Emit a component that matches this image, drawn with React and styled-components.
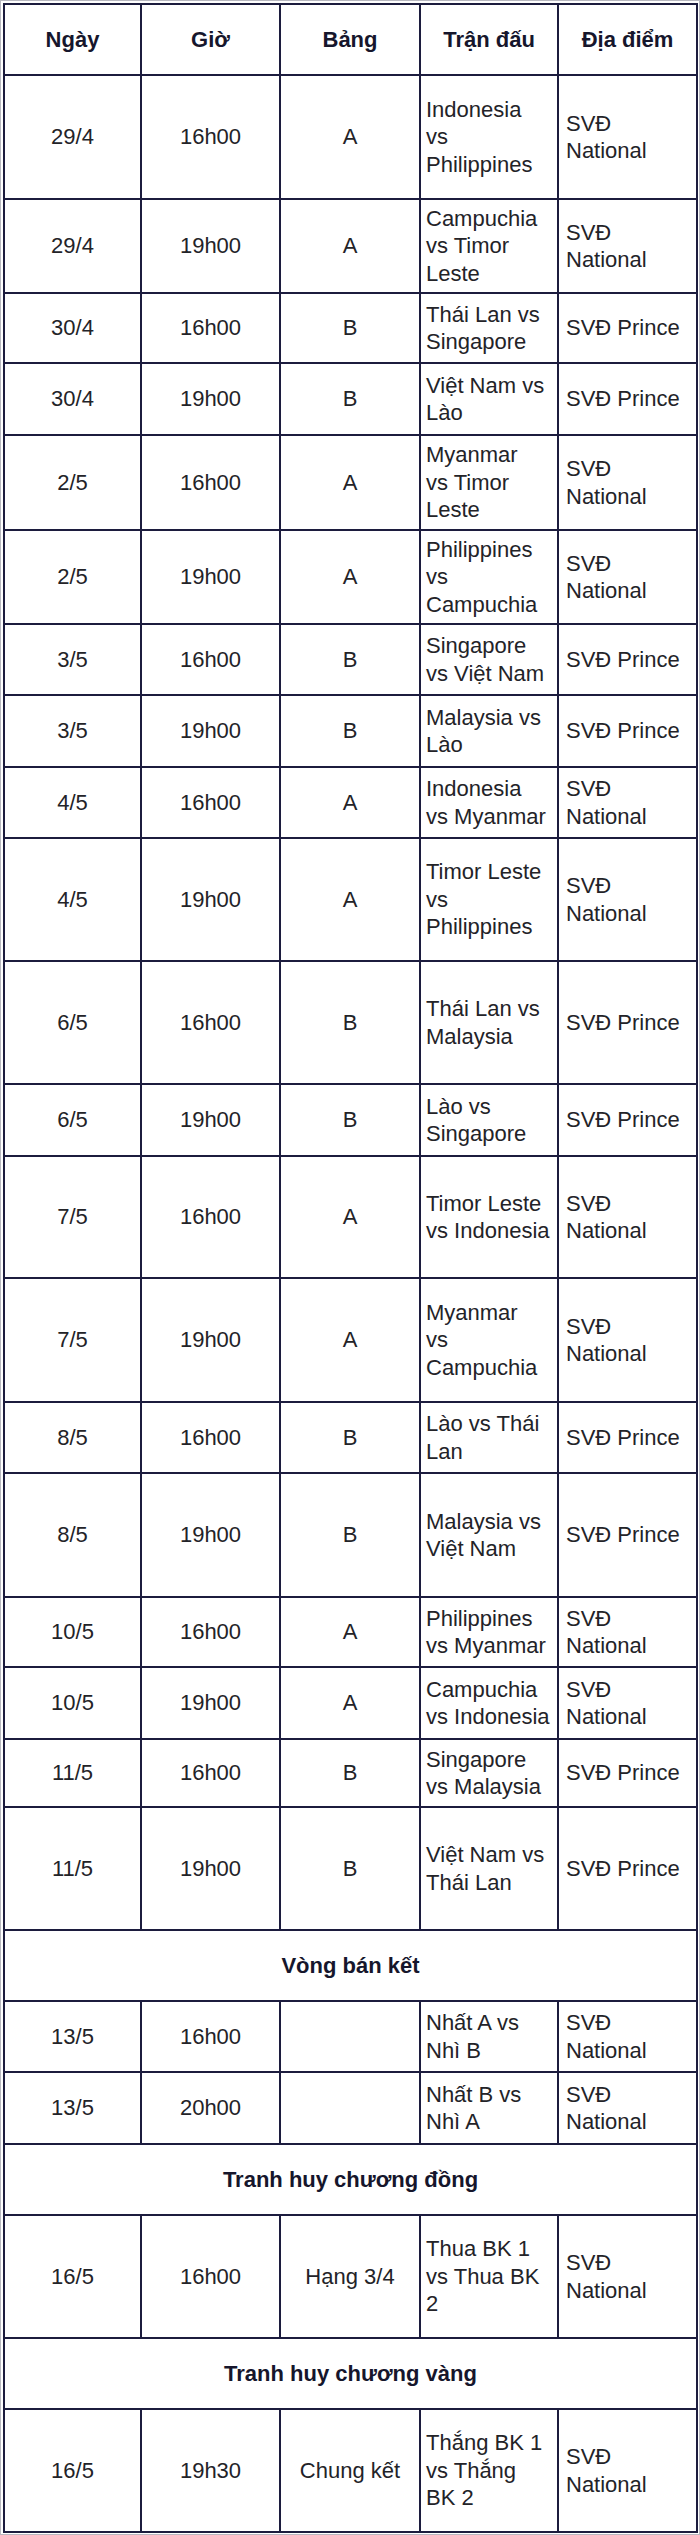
import React, { Fragment } from 'react'
import styled, { createGlobalStyle } from 'styled-components'

const GlobalStyle = createGlobalStyle`
  html, body {
    margin: 0;
    padding: 0;
    background: #ffffff;
  }
`

const matches = [
  { date: '29/4', time: '16h00', group: 'A', match: ['Indonesia', 'vs', 'Philippines'], venue: ['SVĐ', 'National'], h: 124 },
  { date: '29/4', time: '19h00', group: 'A', match: ['Campuchia', 'vs Timor', 'Leste'], venue: ['SVĐ', 'National'], h: 94 },
  { date: '30/4', time: '16h00', group: 'B', match: ['Thái Lan vs', 'Singapore'], venue: ['SVĐ Prince'], h: 70 },
  { date: '30/4', time: '19h00', group: 'B', match: ['Việt Nam vs', 'Lào'], venue: ['SVĐ Prince'], h: 72 },
  { date: '2/5', time: '16h00', group: 'A', match: ['Myanmar', 'vs Timor', 'Leste'], venue: ['SVĐ', 'National'], h: 95 },
  { date: '2/5', time: '19h00', group: 'A', match: ['Philippines', 'vs', 'Campuchia'], venue: ['SVĐ', 'National'], h: 94 },
  { date: '3/5', time: '16h00', group: 'B', match: ['Singapore', 'vs Việt Nam'], venue: ['SVĐ Prince'], h: 71 },
  { date: '3/5', time: '19h00', group: 'B', match: ['Malaysia vs', 'Lào'], venue: ['SVĐ Prince'], h: 72 },
  { date: '4/5', time: '16h00', group: 'A', match: ['Indonesia', 'vs Myanmar'], venue: ['SVĐ', 'National'], h: 71 },
  { date: '4/5', time: '19h00', group: 'A', match: ['Timor Leste', 'vs', 'Philippines'], venue: ['SVĐ', 'National'], h: 123 },
  { date: '6/5', time: '16h00', group: 'B', match: ['Thái Lan vs', 'Malaysia'], venue: ['SVĐ Prince'], h: 123 },
  { date: '6/5', time: '19h00', group: 'B', match: ['Lào vs', 'Singapore'], venue: ['SVĐ Prince'], h: 72 },
  { date: '7/5', time: '16h00', group: 'A', match: ['Timor Leste', 'vs Indonesia'], venue: ['SVĐ', 'National'], h: 122 },
  { date: '7/5', time: '19h00', group: 'A', match: ['Myanmar', 'vs', 'Campuchia'], venue: ['SVĐ', 'National'], h: 124 },
  { date: '8/5', time: '16h00', group: 'B', match: ['Lào vs Thái', 'Lan'], venue: ['SVĐ Prince'], h: 71 },
  { date: '8/5', time: '19h00', group: 'B', match: ['Malaysia vs', 'Việt Nam'], venue: ['SVĐ Prince'], h: 124 },
  { date: '10/5', time: '16h00', group: 'A', match: ['Philippines', 'vs Myanmar'], venue: ['SVĐ', 'National'], h: 70 },
  { date: '10/5', time: '19h00', group: 'A', match: ['Campuchia', 'vs Indonesia'], venue: ['SVĐ', 'National'], h: 72 },
  { date: '11/5', time: '16h00', group: 'B', match: ['Singapore', 'vs Malaysia'], venue: ['SVĐ Prince'], h: 68 },
  { date: '11/5', time: '19h00', group: 'B', match: ['Việt Nam vs', 'Thái Lan'], venue: ['SVĐ Prince'], h: 123 },
  { section: 'Vòng bán kết', h: 71 },
  { date: '13/5', time: '16h00', group: '', match: ['Nhất A vs', 'Nhì B'], venue: ['SVĐ', 'National'], h: 71 },
  { date: '13/5', time: '20h00', group: '', match: ['Nhất B vs', 'Nhì A'], venue: ['SVĐ', 'National'], h: 72 },
  { section: 'Tranh huy chương đồng', h: 71 },
  { date: '16/5', time: '16h00', group: 'Hạng 3/4', match: ['Thua BK 1', 'vs Thua BK', '2'], venue: ['SVĐ', 'National'], h: 123 },
  { section: 'Tranh huy chương vàng', h: 71 },
  { date: '16/5', time: '19h30', group: 'Chung kết', match: ['Thắng BK 1', 'vs Thắng', 'BK 2'], venue: ['SVĐ', 'National'], h: 123 },
]

const Lines = ({ items }) => items.map((line, i) => (
  <Fragment key={i}>
    {i > 0 && <br />}
    {line}
  </Fragment>
))

const App = () => {
  return (
    <>
      <GlobalStyle />
      <Frame>
        <Table>
          <colgroup>
            <col style={{ width: 137 }} />
            <col style={{ width: 139 }} />
            <col style={{ width: 140 }} />
            <col style={{ width: 138 }} />
            <col style={{ width: 139 }} />
          </colgroup>
          <thead>
            <Row $h={71}>
              <HeadCell>Ngày</HeadCell>
              <HeadCell>Giờ</HeadCell>
              <HeadCell>Bảng</HeadCell>
              <HeadCell>Trận đấu</HeadCell>
              <HeadCell>Địa điểm</HeadCell>
            </Row>
          </thead>
          <tbody>
            {matches.map((m, i) => m.section ? (
              <Row key={i} $h={m.h}>
                <SectionCell colSpan={5}>{m.section}</SectionCell>
              </Row>
            ) : (
              <Row key={i} $h={m.h}>
                <Cell>{m.date}</Cell>
                <Cell>{m.time}</Cell>
                <Cell>{m.group}</Cell>
                <Cell $left $pad={5}><Lines items={m.match} /></Cell>
                <Cell $left $pad={7}><Lines items={m.venue} /></Cell>
              </Row>
            ))}
          </tbody>
        </Table>
      </Frame>
    </>
  )
}

const Frame = styled.div`
  width: 700px;
  box-sizing: border-box;
  border: 1px solid #b8b8c0;
  padding: 2px 1px 1px 2px;
  background: #ffffff;
`

const Table = styled.table`
  width: 695px;
  table-layout: fixed;
  border-collapse: separate;
  border-spacing: 0;
  border-left: 2px solid #1c1c3e;
  border-top: 2px solid #1c1c3e;
  font-family: "Liberation Sans", Arial, sans-serif;
  font-size: 22px;
  line-height: 27.5px;
  color: #232328;
`

const Row = styled.tr`
  height: ${p => p.$h}px;
`

const Cell = styled.td`
  box-sizing: border-box;
  border-right: 2px solid #1c1c3e;
  border-bottom: 2px solid #1c1c3e;
  padding: 0 ${p => p.$pad || 0}px;
  text-align: ${p => (p.$left ? 'left' : 'center')};
  vertical-align: middle;
  white-space: nowrap;
  overflow: hidden;
`

const HeadCell = styled.th`
  box-sizing: border-box;
  border-right: 2px solid #1c1c3e;
  border-bottom: 2px solid #1c1c3e;
  padding: 0;
  font-weight: bold;
  color: #16162c;
  text-align: center;
  vertical-align: middle;
  white-space: nowrap;
`

const SectionCell = styled(HeadCell).attrs({ as: 'td' })``

export default App
